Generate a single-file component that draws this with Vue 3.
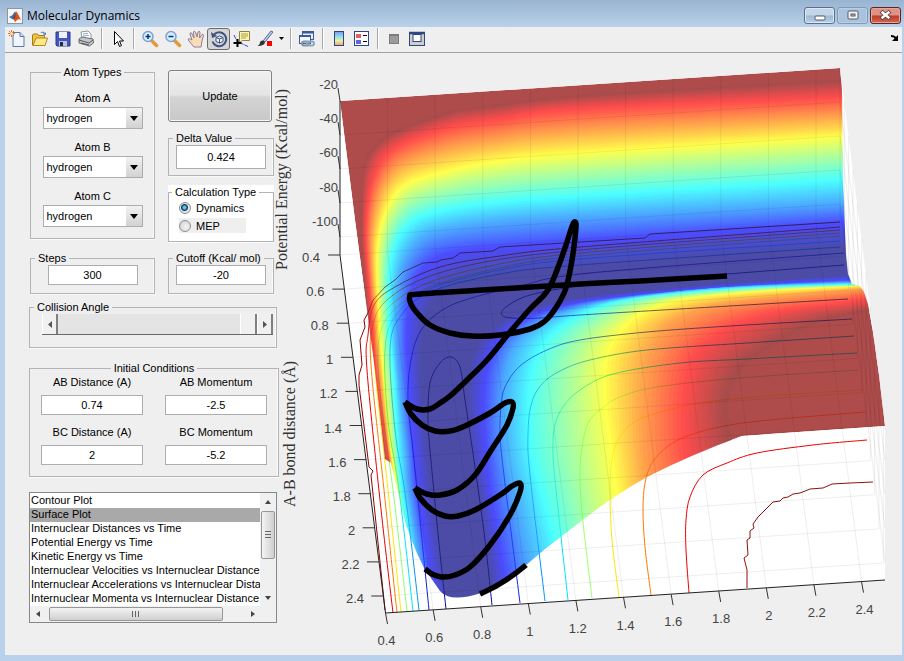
<script setup>
import { ref } from 'vue'

const atoms = ref([
  { id: 'atom-a', label: 'Atom A', value: 'hydrogen' },
  { id: 'atom-b', label: 'Atom B', value: 'hydrogen' },
  { id: 'atom-c', label: 'Atom C', value: 'hydrogen' }
])
const steps = ref('300')
const delta = ref('0.424')
const cutoff = ref('-20')
const calcType = ref('dynamics')
const angle = ref(180)
const conditions = ref([
  { id: 'ab-dist', label: 'AB Distance (A)', value: '0.74' },
  { id: 'ab-mom', label: 'AB Momentum', value: '-2.5' },
  { id: 'bc-dist', label: 'BC Distance (A)', value: '2' },
  { id: 'bc-mom', label: 'BC Momentum', value: '-5.2' }
])
const plots = [
  'Contour Plot',
  'Surface Plot',
  'Internuclear Distances vs Time',
  'Potential Energy vs Time',
  'Kinetic Energy vs Time',
  'Internuclear Velocities vs Internuclear Distance',
  'Internuclear Accelerations vs Internuclear Distance',
  'Internuclear Momenta vs Internuclear Distance'
]
const plot = ref('Surface Plot')

// Catmull-Rom spline through the points, as cubic segments
function curve(p, start = 'M') {
  let d = `${start}${p[0][0]} ${p[0][1]}`
  for (let i = 0; i < p.length - 1; i++) {
    const a = p[i - 1] || p[i]
    const b = p[i]
    const c = p[i + 1]
    const e = p[i + 2] || c
    const q = [b[0] + (c[0] - a[0]) / 6, b[1] + (c[1] - a[1]) / 6, c[0] - (e[0] - b[0]) / 6, c[1] - (e[1] - b[1]) / 6]
    d += `C${q.map((v) => v.toFixed(1)).join(' ')} ${c[0].toFixed(1)} ${c[1].toFixed(1)}`
  }
  return d
}
const line = (p) => 'M' + p.map((v) => v.join(' ')).join('L')

// Key isolines of the energy surface: [level, reactant wall, plateau side]
const mid = (a, b) => a.map((p, i) => [(p[0] + b[i][0]) / 2, (p[1] + b[i][1]) / 2])
const redWall = [[405,610],[394,500],[387,450],[377,380],[372,320],[366,220],[384,157],[440,129],[500,118],[580,108],[850,96]]
const yellowWall = [[412,610],[398,500],[391,450],[384,380],[379,320],[378,240],[398,190],[440,172],[500,160],[580,152],[850,135]]
const isolines = [
  [0, [[448,610],[433,500],[428,450],[422,390],[422,345],[428,312],[443,293],[465,282],[510,273],[580,266],[850,246]],
    [[495,610],[480,500],[472,450],[468,400],[471,365],[482,340],[505,320],[545,305],[600,295],[720,284],[850,275]]],
  [0.125, [[436,610],[418,500],[413,450],[408,380],[406,330],[412,287],[427,263],[450,252],[500,246],[580,240],[850,221]],
    [[512,610],[493,500],[487,450],[485,400],[490,362],[502,338],[525,320],[560,307],[610,298],[720,287],[850,280]]],
  [0.25, [[428,610],[410,500],[406,450],[399,380],[396,325],[401,272],[418,242],[445,230],[500,222],[580,217],[850,203]],
    [[540,610],[515,500],[505,450],[503,400],[508,362],[520,339],[545,320],[580,307],[630,297],[725,287],[852,282]]],
  [0.375, [[420,610],[403,500],[398,450],[394,380],[389,320],[391,258],[408,224],[440,210],[500,201],[580,195],[850,178]],
    [[575,610],[545,500],[532,450],[530,400],[536,362],[550,337],[575,318],[605,305],[650,296],[740,288],[856,284]]],
  [0.625, yellowWall,
    [[640,610],[620,500],[613,450],[607,400],[608,360],[618,337],[635,319],[660,306],[700,297],[780,290],[862,286]]],
  [0.75, mid(redWall, yellowWall),
    [[670,610],[650,500],[643,450],[643,400],[647,363],[660,335],[680,318],[708,307],[750,300],[810,294],[866,289]]],
  [0.875, redWall,
    [[720,610],[697,500],[687,450],[686,400],[695,358],[715,338],[745,322],[785,311],[820,306],[850,302],[880,297]]],
  [1, [[400,610],[390,500],[383,450],[373,380],[367,320],[361,215],[372,148],[440,114],[500,104],[580,95],[850,79]],
    [[790,610],[765,500],[735,450],[728,400],[745,365],[775,345],[805,328],[835,318],[855,314],[872,311],[895,307]]]
]

// Jet colour map, lightened by the transparency of the surface
function jet(t) {
  const ch = (c) => {
    const v = Math.max(0, Math.min(1, 1.5 - Math.abs(4 * t - c)))
    return Math.round(76 + 179 * v)
  }
  return `rgb(${ch(3)},${ch(2)},${ch(1)})`
}
function bandAt(t) {
  let k = 0
  while (k < isolines.length - 2 && t > isolines[k + 1][0]) k++
  const [t0, u0, l0] = isolines[k]
  const [t1, u1, l1] = isolines[k + 1]
  const f = (t - t0) / (t1 - t0)
  const mix = (a, b) => a.map((p, i) => [p[0] + (b[i][0] - p[0]) * f, p[1] + (b[i][1] - p[1]) * f])
  return curve(mix(u0, u1)) + curve(mix(l0, l1).reverse(), 'L') + 'Z'
}
const bands = []
for (let i = 80; i >= 0; i--) bands.push({ fill: jet(i / 80), d: bandAt(i / 80) })

const surface = 'M340 101L840 68L842 90L843 180L846 255L848 274L852 284L860 286L864 292L868 304L873 332L879 375L885 426L742 436Q690 455 647 477Q610 498 580 522L545 549L525 566L481 593Q450 603 440 591L424 568Q405 530 400 500L391 463L385 459L375 370L355 220Z'

const contours = [
  { c: '#8f0000', d: line([[385,610],[371,475],[373,471],[369,467],[359,385],[359,375],[362,365],[360,340],[365,327],[364,320],[368,313],[373,300],[385,287],[395,280],[403,272],[423,263],[437,262],[441,260],[453,258],[460,253],[477,252],[493,251],[500,247],[580,242],[645,238],[650,234],[840,222]]) },
  { c: '#e80000', d: curve([[393,613],[380,500],[367,370],[368,335],[374,305],[395,287],[440,267],[500,256],[580,247],[840,227]]) },
  { c: '#ff7a00', d: curve([[397,613],[384,490],[371,365],[373,325],[385,302],[420,280],[480,263],[580,250],[840,230]]) },
  { c: '#ffe600', d: curve([[401,612],[388,490],[376,380],[375,335],[388,308],[425,284],[490,266],[580,253],[840,233]]) },
  { c: '#8cff70', d: curve([[407,611],[393,490],[380,390],[379,340],[392,312],[430,287],[500,268],[580,256],[840,236]]) },
  { c: '#00e5ff', d: curve([[413,611],[399,490],[388,420],[385,350],[396,315],[430,289],[500,270],[580,259],[840,241]]) },
  { c: '#0a96f0', d: curve([[419,610],[406,500],[395,430],[390,350],[400,317],[430,292],[500,274],[580,265],[840,247]]) },
  { c: '#1020d8', d: curve([[429,610],[414,460],[408,400],[411,360],[420,332],[438,313],[465,300],[520,286],[590,273],[844,253]]) },
  { c: '#0808a0', d: curve([[446,609],[440,553],[430,450],[428,420],[430,383],[440,363],[451,357],[460,367],[465,400],[475,467],[485,540],[492,605]]) },
  { c: '#0808a0', d: curve([[844,265],[727,274],[650,280],[580,286],[530,295],[506,307],[502,315],[512,318],[540,318],[580,315],[713,307],[848,299]]) },
  { c: '#0a28e8', d: curve([[520,603],[503,467],[500,433],[501,407],[505,387],[520,366],[547,350],[580,340],[647,332],[730,326],[852,319]]) },
  { c: '#0096ff', d: curve([[545,601],[530,475],[528,435],[531,405],[541,385],[560,371],[590,360],[647,350],[747,343],[854,336]]) },
  { c: '#00e5ff', d: curve([[568,600],[556,490],[553,450],[555,425],[563,407],[580,390],[613,374],[680,363],[747,359],[857,353]]) },
  { c: '#9cff70', d: curve([[592,598],[582,513],[580,473],[582,447],[588,423],[600,410],[620,397],[657,387],[740,378],[858,370]]) },
  { c: '#ffe600', d: curve([[619,597],[612,540],[610,490],[612,460],[618,440],[633,423],[660,412],[707,402],[780,395],[862,390]]) },
  { c: '#ff7a00', d: curve([[651,595],[645,547],[643,510],[645,483],[652,463],[667,447],[690,435],[730,425],[780,419],[865,412]]) },
  { c: '#f00000', d: curve([[689,593],[686,550],[686,520],[690,497],[703,475],[727,463],[757,453],[813,445],[867,440]]) },
  { c: '#8f1010', d: line([[747,588],[747,570],[744,558],[748,555],[747,540],[750,538],[750,531],[754,528],[753,524],[758,517],[773,502],[780,501],[783,498],[788,497],[793,494],[800,493],[810,489],[823,488],[832,484],[850,483],[873,482]]) }
]

const trajectory = curve([[727,276],[640,281],[580,284],[500,289],[420,294],[410,296],[411,304],[418,314],[430,325],[450,333],[472,336],[500,335],[530,329],[545,321],[557,306],[566,288],[572,260],[575,238],[576,224],[573,224],[566,245],[560,262],[553,280],[545,294],[530,309],[510,332],[487,360],[468,379],[450,396],[440,403],[430,409],[417,409],[405,402]])
  + curve([[405,402],[411,414],[422,425],[435,431],[450,431],[465,426],[490,413],[505,403],[512,402],[513,408],[507,425],[490,452],[475,475],[457,490],[440,495],[427,494],[415,488]])
  + curve([[415,488],[420,498],[432,510],[445,516],[458,516],[475,510],[500,495],[512,486],[520,483],[520,492],[510,515],[490,545],[470,567],[455,575],[442,577],[432,574],[425,569]])
  + 'M480 594Q505 583 526 565'

// Box geometry: back edge, floor depth and the x, y and z ticks
const ticks = [0, 1, 2, 3, 4, 5, 6, 7, 8, 9, 10]
const names = ['0.4', '0.6', '0.8', '1', '1.2', '1.4', '1.6', '1.8', '2', '2.2', '2.4']
const grid = ticks.map((i) => {
  const x = 340 + 47.6 * i
  const top = 101 - 3.14 * i
  const fx = 340 + 4.33 * i
  const fy = 255 + 34.1 * i
  const g = i ? `M${x} ${top}v154l45.5 358` : ''
  return g + `M${fx} ${fy}l500 -33v-154`
}).join('') + [1, 2, 3, 4].map((i) => `M340 ${101 + 34 * i}l500 -33l45 358`).join('')
const tickMarks = ticks.map((i) =>
  `M${340 + 4.33 * i} ${255 + 34.1 * i}h-12M${385.5 + 47.6 * i} ${613 - 3.14 * i}l2 11`
).join('') + [0, 1, 2, 3, 4].map((i) => `M340 ${101 + 34 * i}l-2 -13`).join('')
const zNames = ['-20', '-40', '-60', '-80', '-100']
</script>

<template>
  <div class="window">
    <header class="titlebar">
      <svg class="logo" width="16" height="16" viewBox="0 0 16 16" aria-hidden="true">
        <rect x=".5" y=".5" width="15" height="15" fill="#f6f6f6" stroke="#8a97a8" />
        <path d="M2 9l3-1.500 3-4 1 3-3 5z" fill="#2f73b3" />
        <path d="M9 3l2 3 3 6-2-1-2 1-2 2-1-2-1-1q2-3 3-8z" fill="#d9501e" />
        <path d="M9 3l-1 4-2 4 2-1z" fill="#7a2410" />
      </svg>
      <h1>Molecular Dynamics</h1>
      <div class="winbtns">
        <button type="button" aria-label="Minimize"><svg width="12" height="13" viewBox="0 0 12 13"><rect x="1" y="7" width="10" height="4" rx="1" fill="#fff" stroke="#555a66" /></svg></button>
        <button type="button" class="dim" aria-label="Maximize"><svg width="12" height="13" viewBox="0 0 12 13"><rect x="1" y="2" width="10" height="8" rx="1" fill="#f4f4f4" stroke="#555a66" /><rect x="4" y="5" width="4" height="2" fill="#a8c0da" stroke="#555a66" /></svg></button>
        <button type="button" class="close" aria-label="Close"><svg width="13" height="13" viewBox="0 0 13 13"><path d="M3.500 3.500l6 5M9.500 3.500l-6 5" stroke="#5a3a3a" stroke-width="4" stroke-linecap="square" /><path d="M3.500 3.500l6 5M9.500 3.500l-6 5" stroke="#fff" stroke-width="2.400" stroke-linecap="square" /></svg></button>
      </div>
    </header>

    <div class="client">
      <nav class="toolbar" aria-label="Figure">
        <button type="button" aria-label="New"><svg width="18" height="18" viewBox="0 0 18 18"><path d="M5 2.500h7l4 4v10H5z" fill="#f1f6fd" stroke="#5b76a8" /><path d="M12 2.500v4h4" fill="#cfdcf0" stroke="#5b76a8" /><path d="M3.500 0v7M0 3.500h7M1 1l5 5M6 1L1 6" stroke="#e0703c" /><circle cx="3.500" cy="3.500" r="1.500" fill="#ffe9a0" /></svg></button>
        <button type="button" aria-label="Open"><svg width="18" height="18" viewBox="0 0 18 18"><path d="M1.500 15V5l1-1h4l1 1.500h6V15z" fill="#f0c445" stroke="#a67a16" /><path d="M2 15.500L5 8h11.500L14 15.500z" fill="#ffe98a" stroke="#b5871a" /><path d="M9 3q3-3 5 0l1-1v3h-3l1-1q-2-2-4-1z" fill="#5d8fc4" /></svg></button>
        <button type="button" aria-label="Save"><svg width="18" height="18" viewBox="0 0 18 18"><path d="M2 2h14v14H3l-1-1z" fill="#4257c4" stroke="#2b3a86" /><rect x="5" y="2" width="8" height="6" fill="#eef2fb" /><rect x="5" y="11" width="8" height="5" fill="#bcc4d6" /><rect x="6" y="12" width="3" height="4" fill="#20284f" /></svg></button>
        <button type="button" aria-label="Print"><svg width="18" height="18" viewBox="0 0 18 18"><path d="M5 8L4 2l7-1 3 3v5z" fill="#fff" stroke="#8c97a8" /><path d="M6 4l5-.7M6 6l6-.7" stroke="#8fa8cc" /><path d="M2 9l3-2 11 2 .5 4-4 3L2 13z" fill="#c4c6c8" stroke="#6b6d70" /><path d="M2 10l10 3 4-3M4 13l8 2" stroke="#55585c" fill="none" /></svg></button>
        <span class="sep"></span>
        <button type="button" aria-label="Edit plot"><svg width="18" height="18" viewBox="0 0 18 18"><path d="M5.500 1.500v13l3-3 2 5 2-1-2-4.500h4z" fill="#fff" stroke="#000" /></svg></button>
        <span class="sep"></span>
        <button type="button" aria-label="Zoom in"><svg width="18" height="18" viewBox="0 0 18 18"><path d="M10.500 10.500l5 5" stroke="#e59a38" stroke-width="3.500" stroke-linecap="round" /><circle cx="7" cy="6.500" r="5" fill="#d5efff" stroke="#7ba3d8" stroke-width="1.500" /><path d="M7 4v5M4.500 6.500h5" stroke="#13306e" stroke-width="1.500" /></svg></button>
        <button type="button" aria-label="Zoom out"><svg width="18" height="18" viewBox="0 0 18 18"><path d="M10.500 10.500l5 5" stroke="#e59a38" stroke-width="3.500" stroke-linecap="round" /><circle cx="7" cy="6.500" r="5" fill="#d5efff" stroke="#7ba3d8" stroke-width="1.500" /><path d="M4.500 6.500h5" stroke="#13306e" stroke-width="1.500" /></svg></button>
        <button type="button" aria-label="Pan"><svg width="18" height="18" viewBox="0 0 18 18"><path d="M7 17L2 11q-2-2 0-2.500L5 10 3 4q0-2 1.500-1L7 8 6.500 2q.5-2 2 0L10 7l1-5q1.500-1.500 2 0l-.5 6L15 4.500q1.500-1 1.500 1L15 11l-1 6z" fill="#fbdcb8" stroke="#8b7f9c" /></svg></button>
        <button type="button" class="on" aria-label="Rotate 3D"><svg width="18" height="18" viewBox="0 0 18 18"><path d="M4 4.500a7 7 0 1 1-1.500 7" fill="none" stroke="#3f557f" stroke-width="2" /><path d="M1 2l1 6 5-2z" fill="#3f557f" /><path d="M6 7.500L9.500 6 13 7.500v4L9.500 13 6 11.500zM6 7.500L9.500 9 13 7.500M9.500 9v4" fill="#eef3fb" stroke="#3f557f" /></svg></button>
        <button type="button" aria-label="Data cursor"><svg width="18" height="18" viewBox="0 0 18 18"><path d="M1 5q3 7 6 8t9 4" stroke="#3a3ae0" fill="none" stroke-dasharray="4 1" /><path d="M6.500 1.500h10v9h-7l-3 2z" fill="#fcf6b0" stroke="#8a8440" /><path d="M8 4h7M8 6h7M8 8h5" stroke="#a59b4a" /><path d="M4.500 9v8M.5 13h8" stroke="#000" stroke-width="2" /></svg></button>
        <button type="button" aria-label="Brush"><svg width="18" height="18" viewBox="0 0 18 18"><path d="M7 11L15 1l2 1-8 10z" fill="#b9cdf0" stroke="#52689c" /><path d="M1 16q3-1 3-4 2-3 5 0 0 4-8 4z" fill="#333" /><rect x="11" y="11" width="5" height="5" fill="#f00" /></svg></button>
        <button type="button" class="caret" aria-label="Brush colour"><svg width="5" height="3" viewBox="0 0 5 3"><path d="M0 0h5L2.500 3z" /></svg></button>
        <span class="sep"></span>
        <button type="button" aria-label="Link plot"><svg width="18" height="18" viewBox="0 0 18 18"><rect x="4.500" y="1.500" width="11" height="8" fill="#e8f0fb" stroke="#3c5a9a" /><path d="M4 2.500h12" stroke="#3c5a9a" stroke-width="2" /><rect x="1.500" y="5.500" width="11" height="8" fill="#f5f9ff" stroke="#3c5a9a" /><path d="M1 6h12" stroke="#3c5a9a" stroke-width="2" /><rect x="4" y="11.500" width="7" height="4" rx="2" fill="none" stroke="#7b93a8" stroke-width="2" /><rect x="9" y="11.500" width="7" height="4" rx="2" fill="none" stroke="#8ca6b8" stroke-width="2" /></svg></button>
        <span class="sep"></span>
        <button type="button" aria-label="Colorbar"><svg width="18" height="18" viewBox="0 0 18 18"><defs><linearGradient id="cb" x2="0" y2="1"><stop stop-color="#8890f0" /><stop offset=".35" stop-color="#86e0f0" /><stop offset=".65" stop-color="#eaf29a" /><stop offset="1" stop-color="#f59a8a" /></linearGradient></defs><rect x="4.500" y="1.500" width="9" height="14" fill="url(#cb)" stroke="#2e4682" /></svg></button>
        <button type="button" aria-label="Legend"><svg width="18" height="18" viewBox="0 0 18 18"><rect x="1.500" y="1.500" width="14" height="14" fill="#fff" stroke="#2e4682" /><rect x="3" y="4" width="5" height="4" fill="#e86060" /><rect x="3" y="10" width="5" height="4" fill="#6060e8" /><path d="M10 5.500h4M10 11.500h4" stroke="#000" /></svg></button>
        <span class="sep"></span>
        <button type="button" aria-label="Hide plot tools"><svg width="18" height="18" viewBox="0 0 18 18"><rect x="4.500" y="4.500" width="9" height="9" fill="#9c9c9c" stroke="#7c7c7c" /><path d="M4 5h10" stroke="#7c7c7c" stroke-width="2" /></svg></button>
        <button type="button" aria-label="Show plot tools"><svg width="18" height="18" viewBox="0 0 18 18"><rect x="1.500" y="2.500" width="15" height="13" fill="#cfcfc8" stroke="#2e4682" /><path d="M1 3h16" stroke="#2e4682" stroke-width="2.500" /><rect x="5" y="4.500" width="8" height="7" fill="#fff" stroke="#2e4682" /></svg></button>
        <button type="button" class="dock" aria-label="Dock figure"><svg width="9" height="7" viewBox="0 0 9 7"><path d="M0 1q4 0 5 3" stroke="#000" stroke-width="2" fill="none" /><path d="M7 0v6H1z" /></svg></button>
      </nav>

      <main>
        <form class="panel" @submit.prevent>
          <div class="cols">
            <div class="col">
              <fieldset class="atoms">
                <legend>Atom Types</legend>
                <div v-for="a in atoms" :key="a.id" class="atom">
                  <label :for="a.id">{{ a.label }}</label>
                  <span class="combo">
                    <select :id="a.id" v-model="a.value"><option>hydrogen</option></select>
                  </span>
                </div>
              </fieldset>
              <fieldset class="small">
                <legend><label for="steps">Steps</label></legend>
                <input id="steps" v-model="steps" type="text" />
              </fieldset>
            </div>
            <div class="col second">
              <button type="button" class="update">Update</button>
              <fieldset class="small delta">
                <legend><label for="delta">Delta Value</label></legend>
                <input id="delta" v-model="delta" type="text" />
              </fieldset>
              <div class="white">
                <fieldset class="calc">
                  <legend>Calculation Type</legend>
                  <label><input v-model="calcType" type="radio" name="calc" value="dynamics" />Dynamics</label>
                  <label class="grey"><input v-model="calcType" type="radio" name="calc" value="mep" />MEP</label>
                </fieldset>
              </div>
              <fieldset class="small">
                <legend><label for="cutoff">Cutoff (Kcal/ mol)</label></legend>
                <input id="cutoff" v-model="cutoff" type="text" />
              </fieldset>
            </div>
          </div>

          <fieldset class="angle">
            <legend><label for="angle">Collision Angle</label></legend>
            <div class="slider">
              <button type="button" aria-label="Decrease"><svg width="4" height="7" viewBox="0 0 4 7"><path d="M4 0v7L0 3.500z" fill="#555" /></svg></button>
              <input id="angle" v-model="angle" type="range" min="0" max="180" />
              <button type="button" aria-label="Increase"><svg width="4" height="7" viewBox="0 0 4 7"><path d="M0 0v7l4-3.500z" fill="#555" /></svg></button>
            </div>
          </fieldset>

          <fieldset class="initial">
            <legend>Initial Conditions</legend>
            <div v-for="c in conditions" :key="c.id" class="cond">
              <label :for="c.id">{{ c.label }}</label>
              <input :id="c.id" v-model="c.value" type="text" />
            </div>
          </fieldset>

          <div class="listbox">
            <select v-model="plot" size="8" aria-label="Plot type">
              <option v-for="p in plots" :key="p">{{ p }}</option>
            </select>
            <div class="vbar">
              <svg width="6" height="4" viewBox="0 0 6 4"><path d="M0 4h6L3 0z" fill="#444" /></svg>
              <span class="vthumb"><i></i></span>
              <svg width="6" height="4" viewBox="0 0 6 4"><path d="M0 0h6L3 4z" fill="#444" /></svg>
            </div>
            <div class="hbar">
              <svg width="4" height="6" viewBox="0 0 4 6"><path d="M4 0v6L0 3z" fill="#444" /></svg>
              <span class="hthumb"><i></i></span>
              <svg width="4" height="6" viewBox="0 0 4 6"><path d="M0 0v6l4-3z" fill="#444" /></svg>
            </div>
            <span class="corner"></span>
          </div>
        </form>

        <svg class="plot" viewBox="277 53 625 602" role="img" aria-label="Potential energy surface with trajectory">
          <defs>
            <clipPath id="surf"><path :d="surface" /></clipPath>
            <g id="contours" fill="none">
              <path v-for="(c, i) in contours" :key="i" :d="c.d" :stroke="c.c" />
            </g>
          </defs>
          <path d="M340 101L840 68L885 426V580L385.500 613L340 255Z" fill="#fff" />
          <use href="#contours" />
          <g clip-path="url(#surf)">
            <path :d="surface" fill="#ae4c4c" />
            <path v-for="(b, i) in bands" :key="i" :d="b.d" :fill="b.fill" />
            <use class="through" href="#contours" />
          </g>
          <path :d="grid" fill="none" stroke="#000" stroke-opacity=".07" />
          <path d="M340 101V255L385.500 613L885 580" fill="none" stroke="#222" />
          <path :d="tickMarks" fill="none" stroke="#333" />
          <path :d="trajectory" fill="none" stroke="#000" stroke-width="5.500" stroke-linejoin="round" />
          <g class="ticks">
            <text v-for="(n, i) in zNames" :key="n" :x="338" :y="89 + 34.200 * i" text-anchor="end">{{ n }}</text>
            <text v-for="(n, i) in names" :key="'y' + n" :x="320 + 4.400 * i" :y="262 + 34.100 * i" text-anchor="end">{{ n }}</text>
            <text v-for="(n, i) in names" :key="'x' + n" :x="386.500 + 47.800 * i" :y="645 - 3.100 * i" text-anchor="middle">{{ n }}</text>
          </g>
          <g class="axis">
            <text transform="translate(287 270) rotate(-90)">Potential Energy (Kcal/mol)</text>
            <text transform="translate(295 507) rotate(-90)">A-B bond distance (Å)</text>
          </g>
        </svg>
      </main>
    </div>
  </div>
</template>

<style>
body { margin: 0; background: #b9d1ea; }
</style>

<style scoped>
* { box-sizing: border-box; }
.window {
  padding: 0 2px 6px 5px;
  background: #b9d1ea;
  font: 11px/14px "Liberation Sans", Arial, sans-serif;
  color: #000;
}
.titlebar {
  display: flex;
  align-items: center;
  height: 27px;
  margin: 0 -2px 0 -5px;
  padding: 4px 3px 0 7px;
  background: linear-gradient(#99b4d1, #b9d1ea);
}
h1 { margin: 0 auto 0 4px; font: 12px/16px "Open Sans", "Noto Sans", sans-serif; }
.winbtns { display: flex; gap: 2px; }
.winbtns button {
  display: flex;
  align-items: center;
  justify-content: center;
  width: 31px;
  height: 17px;
  padding: 0;
  border: 1px solid #5d6f88;
  border-radius: 3px;
  box-shadow: inset 0 0 0 1px #dbe8f5;
  background: linear-gradient(#c3d5e8 48%, #9fb8d3 52%, #b8d0e8);
}
.winbtns .dim { border-color: #8299b5; box-shadow: inset 0 0 0 1px #b9cfe6; background: #a9c2dd; }
.winbtns .close { border-color: #5b2324; box-shadow: inset 0 0 0 1px #e3a79c; background: linear-gradient(#dd9286 48%, #bf3a28 52%, #cf6a50); }
.client { background: #efefef; }
.toolbar { display: flex; align-items: center; height: 26px; padding-bottom: 2px; border-bottom: 1px solid #a0a0a0; }
.toolbar button {
  display: flex;
  align-items: center;
  justify-content: center;
  width: 23px;
  height: 22px;
  padding: 0;
  border: 0;
  background: none;
}
.toolbar .on { border: 1px solid #6c6c6c; border-radius: 3px; background: #d6d6d6; }
.toolbar .caret { width: 10px; }
.toolbar .dock { width: 14px; margin-left: auto; }
.sep { width: 9px; height: 21px; background: linear-gradient(90deg, transparent 4px, #a8a8a8 4px, #a8a8a8 5px, #fff 5px, #fff 6px, transparent 6px); }
main { display: flex; align-items: flex-start; }
.panel { flex: none; width: 272px; padding: 12px 0 32px 24px; }
.plot { flex: 1; min-width: 0; overflow: visible; }
fieldset {
  min-width: 0;
  margin: 0;
  padding: 0;
  border: 1px solid #b4b4b8;
  box-shadow: inset -1px 0 #fafafa, 0 1px #fafafa;
}
legend { margin-left: 4px; padding: 0 3px; }
input[type="text"] {
  display: block;
  width: 90px;
  height: 20px;
  margin: 0 auto;
  padding: 0;
  border: 1px solid #abadb3;
  background: #fff;
  font: inherit;
  text-align: center;
}
.cols { display: grid; grid-template-columns: 125px 106px; gap: 13px; padding-left: 1px; }
.col { display: flex; flex-direction: column; justify-content: space-between; height: 229px; }
.atoms { display: flex; flex-direction: column; gap: 11px; height: 174px; padding-top: 12px; }
.atoms legend { margin: 0 auto; }
.atom { display: flex; flex-direction: column; align-items: center; gap: 2px; }
.combo { position: relative; width: 100px; height: 22px; }
.combo select {
  appearance: none;
  width: 100%;
  height: 100%;
  padding: 0 18px 0 3px;
  border: 1px solid #abadb3;
  border-radius: 0;
  background: linear-gradient(#f2f2f2, #d2d2d2) right / 16px 100% no-repeat #fff;
  color: #000;
  font: inherit;
}
.combo::after {
  content: "";
  position: absolute;
  right: 5px;
  top: 9px;
  border: 4px solid transparent;
  border-top: 5px solid #000;
  border-bottom: 0;
  pointer-events: none;
}
.small { height: 43px; }
.second { padding-top: 5px; }
.update {
  height: 52px;
  width: 104px;
  border: 1px solid #808080;
  border-radius: 3px;
  box-shadow: inset 0 0 0 1px #f6f6f6;
  background: linear-gradient(#f0f0f0, #e4e4e4 48%, #d4d4d4 52%, #c8c8c8);
  font: inherit;
}
.delta { height: 45px; }
.delta input { height: 24px; }
.white { background: #fff; }
.calc { display: flex; flex-direction: column; gap: 3px; height: 57px; padding-top: 1px; }
.calc legend { margin-left: 3px; }
.calc label { display: flex; align-items: center; gap: 5px; height: 15px; margin-left: 10px; }
.calc .grey { width: 67px; background: #efefef; }
.calc input {
  appearance: none;
  width: 12px;
  height: 12px;
  margin: 0;
  border: 1px solid #8e8f8f;
  border-radius: 50%;
  background: radial-gradient(circle at 60% 60%, #f4f4f4, #c8ccd0);
}
.calc input:checked { background: radial-gradient(circle at 45% 45%, #6cc4e8 1px, #123c62 3px, #dfe6ea 4px); }
.angle { width: 248px; height: 48px; margin-top: 6px; }
.slider { display: flex; height: 21px; margin: 0 3px 0 12px; border-bottom: 1px solid #696969; }
.slider button {
  display: flex;
  align-items: center;
  justify-content: center;
  width: 16px;
  padding: 0;
  border: 0;
  border-left: 1px solid #fff;
  border-right: 2px solid #808080;
  background: #f0f0f0;
}
.slider input { flex: 1; min-width: 0; appearance: none; height: 20px; margin: 0; background: #e4e4e4; }
.slider input::-webkit-slider-thumb {
  appearance: none;
  width: 17px;
  height: 20px;
  background: #f0f0f0;
  border-right: 2px solid #808080;
  border-left: 1px solid #fff;
}
.initial {
  display: grid;
  grid-template-columns: 102px 102px;
  align-content: start;
  justify-content: center;
  gap: 10px 22px;
  width: 250px;
  height: 116px;
  margin-top: 13px;
}
.initial legend { margin: 0 auto; }
.cond { display: flex; flex-direction: column; gap: 6px; text-align: center; }
.cond input { width: 102px; margin: 0; }
.listbox {
  display: grid;
  grid-template: 113px 16px / 1fr 16px;
  width: 248px;
  margin-top: 15px;
  border: 1px solid #828790;
  background: #fff;
}
.listbox select {
  min-width: 0;
  height: 113px;
  padding: 1px 0 0;
  border: 0;
  border-radius: 0;
  outline: 0;
  overflow: hidden;
  scrollbar-width: none;
  background: #fff;
  font: inherit;
}
.listbox option { height: 14px; min-height: 14px; padding: 0 1px; line-height: 14px; color: #000; overflow: hidden; white-space: nowrap; }
.listbox option:checked { background: #a9a9a9 linear-gradient(#a9a9a9, #a9a9a9); color: #000; }
.vbar { display: flex; flex-direction: column; align-items: center; padding: 7px 0 6px; background: #f0f0f0; }
.hbar { display: flex; align-items: center; padding: 0 5px 0 6px; background: #f0f0f0; }
.corner { background: #f0f0f0; }
.vthumb, .hthumb { display: flex; align-items: center; justify-content: center; border: 1px solid #979797; border-radius: 2px; }
.vthumb { width: 14px; height: 48px; margin: 7px 0 auto; background: linear-gradient(90deg, #f4f4f4, #cfcfcf); }
.hthumb { width: 174px; height: 14px; margin: 0 auto 0 9px; background: linear-gradient(#f4f4f4, #cfcfcf); }
.vthumb i { width: 6px; height: 8px; background: repeating-linear-gradient(#666 0 1px, transparent 1px 3px); }
.hthumb i { width: 8px; height: 6px; background: repeating-linear-gradient(90deg, #666 0 1px, transparent 1px 3px); }
.through { mix-blend-mode: multiply; opacity: .6; }
.ticks { font: 13px "Liberation Sans", Arial, sans-serif; fill: #444; }
.axis { font: 16px "Liberation Serif", "Times New Roman", serif; fill: #333; }
</style>
